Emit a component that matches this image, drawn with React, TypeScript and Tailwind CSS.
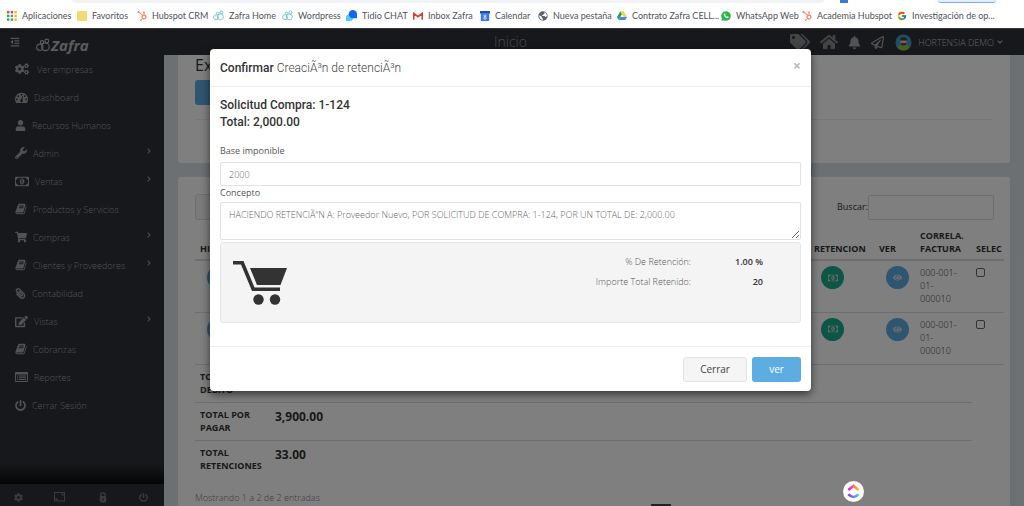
import type { ReactNode } from "react";
import {
  FaBell,
  FaChevronDown,
  FaCog,
  FaCogs,
  FaEdit,
  FaEye,
  FaHome,
  FaOutdent,
  FaPaperclip,
  FaPowerOff,
  FaRegPaperPlane,
  FaShoppingCart,
  FaTags,
  FaUser,
  FaWrench,
  FaHubspot,
  FaChevronRight,
} from "react-icons/fa";
import { FcGoogle } from "react-icons/fc";

const BOOK =
  "M1703 478q40 57 18 129l-275 906q-19 64-76.5 107.5t-122.5 43.5h-923q-77 0-148.5-53.5t-99.5-131.5q-24-67-2-127 0-4 3-27t4-37q1-8-3-21.5t-3-19.5q2-11 8-21t16.5-23.5 16.5-23.5q23-38 45-91.5t30-91.5q3-10 .5-30t-.5-28q3-11 17-28t17-23q21-36 42-92t25-90q1-9-2.5-32t.5-28q4-13 22-30.5t22-22.5q19-26 42.5-84.5t27.5-96.5q1-8-3-25.5t-2-26.5q2-8 9-18t18-23 17-21q8-12 16.5-30.5t15-35 16-36 19.5-32 26.5-23.5 36-11.5 47.5 5.5l-1 3q38-9 51-9h761q74 0 114 56t18 130l-274 906q-36 119-71.5 153.5t-128.5 34.5h-869q-27 0-38 15-11 16-1 43 24 70 144 70h923q29 0 56-15.5t35-41.5l300-987q7-22 5-57 38 15 59 43zm-1064 2q-4 13 2 22.5t20 9.5h608q13 0 25.5-9.5t16.5-22.5l21-64q4-13-2-22.5t-20-9.5h-608q-13 0-25.5 9.5t-16.5 22.5zm-83 256q-4 13 2 22.5t20 9.5h608q13 0 25.5-9.5t16.5-22.5l21-64q4-13-2-22.5t-20-9.5h-608q-13 0-25.5 9.5t-16.5 22.5z";
const MONEY =
  "M768 1152h384v-96h-128v-448h-114l-148 137 77 80q42-37 55-57h2v288h-128v96zm512-256q0 70-21 142t-59.5 134-101.5 101-138 39-138-39-101.5-101-59.5-134-21-142 21-142 59.5-134 101.5-101 138-39 138 39 101.5 101 59.5 134 21 142zm512 256v-512q-106 0-181-75t-75-181h-1152q0 106-75 181t-181 75v512q106 0 181 75t75 181h1152q0-106 75-181t181-75zm128-832v1152q0 26-19 45t-45 19h-1792q-26 0-45-19t-19-45v-1152q0-26 19-45t45-19h1792q26 0 45 19t19 45z";
const GAUGE =
  "M384 1152q0-53-37.5-90.5t-90.5-37.5-90.5 37.5-37.5 90.5 37.5 90.5 90.5 37.5 90.5-37.5 37.5-90.5zm192-448q0-53-37.5-90.5t-90.5-37.5-90.5 37.5-37.5 90.5 37.5 90.5 90.5 37.5 90.5-37.5 37.5-90.5zm428 481l101-382q6-26-7.5-48.5t-38.5-29.5-48 6.5-30 39.5l-101 382q-60 5-107 43.5t-63 98.5q-20 77 20 146t117 89 146-20 89-117q16-60-6-117t-72-91zm660-33q0-53-37.5-90.5t-90.5-37.5-90.5 37.5-37.5 90.5 37.5 90.5 90.5 37.5 90.5-37.5 37.5-90.5zm-640-640q0-53-37.5-90.5t-90.5-37.5-90.5 37.5-37.5 90.5 37.5 90.5 90.5 37.5 90.5-37.5 37.5-90.5zm448 192q0-53-37.5-90.5t-90.5-37.5-90.5 37.5-37.5 90.5 37.5 90.5 90.5 37.5 90.5-37.5 37.5-90.5zm320 448q0 261-141 483-19 29-54 29h-1402q-35 0-54-29-141-221-141-483 0-182 71-348t191-286 286-191 348-71 348 71 286 191 191 286 71 348z";

function BookIcon() {
  return (
    <svg viewBox="0 0 1792 1792" className="size-3" fill="currentColor">
      <path d={BOOK} />
    </svg>
  );
}

function MoneyIcon({ className }: { className: string }) {
  return (
    <svg viewBox="0 0 1920 1792" className={className} fill="currentColor">
      <path d={MONEY} />
    </svg>
  );
}

function GaugeIcon() {
  return (
    <svg viewBox="0 0 1792 1792" className="size-[13px]" fill="currentColor">
      <path d={GAUGE} />
    </svg>
  );
}

function ListIcon() {
  return (
    <svg viewBox="0 0 13 11" className="h-[11px] w-[13px]" fill="currentColor">
      <path
        fillRule="evenodd"
        d="M1 0h11a1 1 0 0 1 1 1v8a1 1 0 0 1-1 1H1a1 1 0 0 1-1-1V1a1 1 0 0 1 1-1zM1 2.5v6.5h11V2.5zM2 3.5h1.2v1H2zM4 3.5h7v1H4zM2 5.3h1.2v1H2zM4 5.3h7v1H4zM2 7.1h1.2v1H2zM4 7.1h7v1H4z"
      />
    </svg>
  );
}

function RoundLockIcon() {
  return (
    <svg viewBox="0 0 8 11" className="h-[11px] w-2">
      <path
        d="M1.700 5V3.200a2.300 2.300 0 0 1 4.600 0V5"
        fill="none"
        stroke="currentColor"
        strokeWidth="1.300"
      />
      <path
        fillRule="evenodd"
        fill="currentColor"
        d="M4 3.800a3.500 3.500 0 1 1 0 7 3.500 3.500 0 0 1 0-7zM3.500 6v3h1V6z"
      />
    </svg>
  );
}

// three linked circles of the Zafra brand
function ZafraMark({ className }: { className: string }) {
  return (
    <svg
      viewBox="0 0 14 14"
      className={className}
      fill="none"
      stroke="currentColor"
      strokeWidth="1.1"
    >
      <circle cx="3.800" cy="9.200" r="3.100" />
      <circle cx="9.400" cy="8.800" r="3.800" />
      <circle cx="6" cy="4.200" r="1.600" />
      <circle cx="10.800" cy="3" r="1.900" />
    </svg>
  );
}

function AppsIcon() {
  const dots = [
    "#ea4335", "#ea4335", "#fbbc04",
    "#34a853", "#4285f4", "#fbbc04",
    "#34a853", "#34a853", "#fbbc04",
  ];
  return (
    <svg viewBox="0 0 10 10" className="size-[10px]">
      {dots.map((fill, i) => (
        <rect
          key={i}
          x={(i % 3) * 3.7}
          y={Math.floor(i / 3) * 3.7}
          width="2.4"
          height="2.4"
          fill={fill}
        />
      ))}
    </svg>
  );
}

function TidioIcon() {
  return (
    <svg viewBox="0 0 12 12" className="size-[11px]">
      <path d="M0 12V8.5A4 4 0 0 1 4 4.5h4V8a4 4 0 0 1-4 4z" fill="#4fc9ff" />
      <path d="M3 4.500a4.500 4.500 0 0 1 9 0V9H7.500A4.500 4.500 0 0 1 3 4.500z" fill="#1466f0" />
    </svg>
  );
}

function GmailIcon() {
  return (
    <svg viewBox="0 0 12 9" className="h-2 w-[10px]">
      <path d="M.9 9V1.300L6 5.300l5.100-4V9" fill="none" stroke="#d93f33" strokeWidth="1.900" />
    </svg>
  );
}

function CalendarIcon() {
  return (
    <svg viewBox="0 0 10 10" className="size-[10px]">
      <rect width="10" height="2.600" fill="#1a4fb8" />
      <rect x=".8" y="2" width="8.400" height="8" fill="#3f78e0" />
      <circle cx="5" cy="4.800" r="1" fill="none" stroke="#fff" strokeWidth=".7" />
      <circle cx="5" cy="7.100" r="1.200" fill="none" stroke="#fff" strokeWidth=".7" />
    </svg>
  );
}

function GlobeIcon() {
  return (
    <svg viewBox="0 0 12 12" className="size-[10px]">
      <circle cx="6" cy="6" r="5.600" fill="#5f6368" />
      <path
        d="M1.500 5l3 1.500v1.500l1.200 1v1.800C3 10.600 1.300 8 1.500 5zM7.500 1.500C9.500 2.200 10.700 4 10.700 6L9 7.500 8 6H5V4.800h1.400V3.500h1.200z"
        fill="#fff"
      />
    </svg>
  );
}

function DriveIcon() {
  return (
    <svg viewBox="0 0 12 10.500" className="h-[9px] w-[10px]">
      <path d="M4 0L0 7l2 3.500L6 3.500z" fill="#1da462" />
      <path d="M4 0h4l4 7H8z" fill="#ffcf48" />
      <path d="M4 7h8l-2 3.500H2z" fill="#4688f4" />
    </svg>
  );
}

function WhatsAppIcon() {
  return (
    <svg viewBox="0 0 12 12" className="size-[10px]">
      <path d="M6 .3a5.700 5.700 0 1 1-2.700 10.700L.3 11.800l.8-2.900A5.700 5.700 0 0 1 6 .3z" fill="#25b845" />
      <path
        d="M4 3l.9-.1.700 1.500-.5.700c.4.800 1 1.400 1.900 1.800l.7-.7 1.500.7c.1 1.300-.9 1.900-1.900 1.700C5.200 8.200 3.600 6.600 3.300 4.600 3.200 4 3.500 3.300 4 3z"
        fill="#fff"
      />
    </svg>
  );
}

function Avatar() {
  return (
    <svg viewBox="0 0 18 18" className="size-[17px]">
      <circle cx="9" cy="9" r="8.500" fill="#3a9fd8" />
      <path d="M2.500 14.500c1-2.500 3.500-3.500 6.500-3.500s5.500 1 6.500 3.500a8.500 8.500 0 0 1-13 0z" fill="#8fbf3f" />
      <circle cx="9" cy="8" r="3.400" fill="#e9c49a" />
      <path d="M5.200 6.800C5.200 4.500 7 3.300 9 3.300s3.800 1.200 3.800 3.500z" fill="#4a4038" />
      <path d="M6 9.500h6c0 1.800-1.400 2.700-3 2.700s-3-.9-3-2.700z" fill="#5a4a3a" />
    </svg>
  );
}

function CartIcon() {
  return (
    <svg viewBox="0 0 54 44" className="h-11 w-[54px]" fill="#333">
      <path d="M0 0h10.500l11 26.500H47V30H19L8 3.500H0z" />
      <path d="M17 7h37l-6.500 17H24z" />
      <circle cx="25.500" cy="38.500" r="5.200" />
      <circle cx="42" cy="38.500" r="5.200" />
    </svg>
  );
}

function ClickUpIcon() {
  return (
    <svg viewBox="0 0 14 16" className="h-[15px] w-[13px]" fill="none" strokeWidth="2.800">
      <defs>
        <linearGradient id="cu-top">
          <stop offset="0" stopColor="#ff02f0" />
          <stop offset="1" stopColor="#ffc800" />
        </linearGradient>
        <linearGradient id="cu-bottom">
          <stop offset="0" stopColor="#8930fd" />
          <stop offset="1" stopColor="#49ccf9" />
        </linearGradient>
      </defs>
      <path d="M1.500 6.500L7 1.900l5.500 4.600" stroke="url(#cu-top)" />
      <path d="M1.500 11c3 3.800 8 3.800 11 0" stroke="url(#cu-bottom)" />
    </svg>
  );
}

const hubspot = <FaHubspot className="size-[10px] text-[#ff7a59]" />;
const zafra = <ZafraMark className="size-[11px] text-[#6cc5c1]" />;

const bookmarks: { label: string; icon: ReactNode }[] = [
  { label: "Aplicaciones", icon: <AppsIcon /> },
  { label: "Favoritos", icon: <span className="size-[10px] rounded-[1px] bg-[#f8d775]" /> },
  { label: "Hubspot CRM", icon: hubspot },
  { label: "Zafra Home", icon: zafra },
  { label: "Wordpress", icon: zafra },
  { label: "Tidio CHAT", icon: <TidioIcon /> },
  { label: "Inbox Zafra", icon: <GmailIcon /> },
  { label: "Calendar", icon: <CalendarIcon /> },
  { label: "Nueva pestaña", icon: <GlobeIcon /> },
  { label: "Contrato Zafra CELL...", icon: <DriveIcon /> },
  { label: "WhatsApp Web", icon: <WhatsAppIcon /> },
  { label: "Academia Hubspot", icon: hubspot },
  { label: "Investigación de op...", icon: <FcGoogle className="size-[10px]" /> },
];

const menu: { label: string; icon: ReactNode; more?: boolean }[] = [
  { label: "Ver empresas", icon: <FaCogs className="mr-[2px] size-[14px]" /> },
  { label: "Dashboard", icon: <GaugeIcon /> },
  { label: "Recursos Humanos", icon: <FaUser className="size-[11px]" /> },
  { label: "Admin", icon: <FaWrench className="size-3" />, more: true },
  { label: "Ventas", icon: <MoneyIcon className="h-[13px] w-[14px]" />, more: true },
  { label: "Productos y Servicios", icon: <BookIcon /> },
  { label: "Compras", icon: <FaShoppingCart className="size-3" />, more: true },
  { label: "Clientes y Proveedores", icon: <BookIcon />, more: true },
  { label: "Contabilidad", icon: <FaPaperclip className="size-[11px] -scale-x-100" /> },
  { label: "Vistas", icon: <FaEdit className="size-[13px]" />, more: true },
  { label: "Cobranzas", icon: <BookIcon /> },
  { label: "Reportes", icon: <ListIcon /> },
  { label: "Cerrar Sesión", icon: <FaPowerOff className="size-[11px]" /> },
];

function BookmarksBar() {
  return (
    <div className="flex h-7 shrink-0 flex-col bg-white font-['Lato',sans-serif]">
      <div className="flex h-[3px] shrink-0 overflow-hidden pr-7 pl-[72px]">
        <div className="flex-1 rounded-b-full bg-[#f1f3f4]" />
        <div className="ml-4 w-2 bg-[#3b78e7]" />
        <div className="ml-[90px] w-[58px] rounded-b-full border-b border-[#7da7f0] bg-[#e3edfd]" />
      </div>
      <nav className="grid flex-1 grid-cols-[70fr_60fr_76fr_69fr_64fr_67fr_67fr_58fr_79fr_104fr_81fr_95fr_127fr] items-center pl-[7px]">
        {bookmarks.map((b) => (
          <a
            key={b.label}
            href="#"
            className="flex items-center gap-[5px] text-[9px] leading-none whitespace-nowrap text-[#505357]"
          >
            {b.icon}
            {b.label}
          </a>
        ))}
      </nav>
    </div>
  );
}

function Header() {
  return (
    <header className="flex h-[27px] shrink-0 items-center border-t border-[#777] bg-[#2d3036] text-[#a5a5a5]">
      <button aria-label="Menú" className="ml-[10px]">
        <FaOutdent className="size-[10px]" />
      </button>
      <div className="ml-4 flex items-center gap-px pt-[6px] text-[#b9b9b9]">
        <ZafraMark className="size-[14px]" />
        <span className="text-[15px] leading-none font-bold italic">Zafra</span>
      </div>
      <h1 className="flex-1 pl-[142px] text-center text-sm leading-none font-light text-[#999]">
        Inicio
      </h1>
      <div className="flex items-center gap-[10px] pr-[21px]">
        <FaTags className="size-5 text-[#888]" />
        <FaHome className="size-[18px] text-[#888]" />
        <FaBell className="size-[13px]" />
        <FaRegPaperPlane className="mr-px size-[13px]" />
        <Avatar />
        <button className="-ml-1 flex items-center gap-[3px] text-[9px] leading-none font-light text-[#c4c4c4]">
          HORTENSIA DEMO
          <FaChevronDown className="size-[6px]" />
        </button>
      </div>
    </header>
  );
}

function Sidebar() {
  return (
    <aside className="flex w-[164px] shrink-0 flex-col bg-[#2d3036] text-[#a5a5a5]">
      <ul>
        {menu.map((item) => (
          <li key={item.label}>
            <a
              href="#"
              className="flex h-7 items-center gap-[6px] pr-3 pl-[15px] text-[9px] leading-none font-light"
            >
              {item.icon}
              <span className="flex-1">{item.label}</span>
              {item.more && <FaChevronRight className="mb-1 size-[6px]" />}
            </a>
          </li>
        ))}
      </ul>
      <div className="mt-auto h-5 bg-linear-to-b from-transparent to-[#0a0a0c]" />
      <div className="grid h-[22px] grid-cols-4 items-center justify-items-center pt-1 text-[#777]">
        <FaCog className="mr-1 size-[9px]" />
        <svg
          viewBox="0 0 11 10"
          className="mr-1 h-[10px] w-[11px]"
          fill="none"
          stroke="currentColor"
        >
          <rect x=".5" y=".5" width="10" height="8.500" />
          <path d="M7 2h2v2M2 5.500v2h2" />
        </svg>
        <RoundLockIcon />
        <FaPowerOff className="size-[9px]" />
      </div>
    </aside>
  );
}

function Round({ color, children }: { color: "blue" | "green"; children: ReactNode }) {
  return (
    <button
      className={`flex size-[23px] items-center justify-center rounded-full text-[#ddd] ${
        color === "blue" ? "bg-[#5dade2]" : "bg-[#1aab88]"
      }`}
    >
      {children}
    </button>
  );
}

const totals = [
  { label: ["TOTAL", "DEBITO"], value: "" },
  { label: ["TOTAL POR", "PAGAR"], value: "3,900.00" },
  { label: ["TOTAL", "RETENCIONES"], value: "33.00" },
];

function Content() {
  return (
    <main className="min-w-0 flex-1 overflow-hidden bg-[#d9e0e7] px-[14px]">
      <section className="h-[108px] rounded-b-[3px] bg-white px-[17px]">
        <h2 className="h-[25px] text-base leading-5">Ex</h2>
        <button aria-label="Exportar" className="h-[25px] w-16 rounded-[3px] bg-[#5dade2]" />
        <hr className="mt-2 border-[#eee]" />
      </section>

      <section className="mt-[14px] h-[400px] rounded-t-[3px] bg-white pt-[17px] pr-[6px] pl-[17px]">
        <div className="flex h-[26px] items-center justify-between pr-[10px]">
          <select
            aria-label="Registros"
            className="h-[26px] w-16 appearance-none rounded-[3px] border border-[#ddd] bg-[#f4f4f4]"
          />
          <label className="flex items-center text-[9px]">
            Buscar:
            <input className="h-[25px] w-[126px] rounded-[2px] border border-[#ddd]" />
          </label>
        </div>

        <table className="mt-[9px] w-full table-fixed text-left text-[9px] leading-[13px]">
          <colgroup>
            <col className="w-[75px]" />
            <col />
            <col className="w-[65px]" />
            <col className="w-[41px]" />
            <col className="w-[56px]" />
            <col className="w-8" />
          </colgroup>
          <thead>
            <tr className="border-b-2 border-[#ddd] align-bottom font-bold">
              <th className="px-[5px] pb-1">HI</th>
              <th />
              <th className="pb-1 pl-1">RETENCION</th>
              <th className="pb-1 pl-1">VER</th>
              <th className="pb-1 pl-1">CORRELA. FACTURA</th>
              <th className="pb-1 pl-1">SELEC</th>
            </tr>
          </thead>
          <tbody>
            {[1, 2].map((row) => (
              <tr key={row} className="h-[52px] border-b border-[#ddd] align-top font-light">
                <td className="pt-[5px] pl-3">
                  <Round color="blue">
                    <FaEye className="size-[9px]" />
                  </Round>
                </td>
                <td />
                <td className="pt-[5px] pl-[11px]">
                  <Round color="green">
                    <MoneyIcon className="size-[10px]" />
                  </Round>
                </td>
                <td className="pt-[5px] pl-[11px]">
                  <Round color="blue">
                    <FaEye className="size-[9px]" />
                  </Round>
                </td>
                <td className="pt-[5px] pr-[10px] pl-1">000-001-01-000010</td>
                <td className="pt-[7px] pl-1">
                  <input
                    type="checkbox"
                    aria-label="Seleccionar"
                    className="block size-[9px] appearance-none rounded-[2px] border border-[#666]"
                  />
                </td>
              </tr>
            ))}
          </tbody>
          <tfoot>
            {totals.map((total, i) => (
              <tr key={i} className="h-[38px] align-top font-bold">
                <th className={i < 2 ? "border-b border-[#ddd] px-[5px] pt-[5px]" : "px-[5px] pt-[5px]"}>
                  {total.label[0]}
                  <br />
                  {total.label[1]}
                </th>
                <td
                  colSpan={4}
                  className={
                    i < 2
                      ? "border-b border-[#ddd] px-[5px] pt-[7px] text-xs leading-[13px]"
                      : "px-[5px] pt-[7px] text-xs leading-[13px]"
                  }
                >
                  {total.value}
                </td>
              </tr>
            ))}
          </tfoot>
        </table>
        <p className="mt-[14px] text-[9px] leading-3 font-light text-[#77788c]">
          Mostrando 1 a 2 de 2 entradas
        </p>
      </section>
    </main>
  );
}

function RetentionModal() {
  return (
    <div
      role="dialog"
      aria-label="Confirmar"
      className="flex w-[601px] flex-col rounded-[4px] bg-white text-[#555] shadow-[0_3px_9px_rgba(0,0,0,0.6)]"
    >
      <div className="flex h-[38px] items-center justify-between border-b border-[#eee] px-[10px]">
        <h3 className="font-['Roboto',sans-serif] text-xs leading-4 font-light text-[#444]">
          <span className="font-medium text-[#333]">Confirmar</span> CreaciÃ³n de retenciÃ³n
        </h3>
        <button aria-label="Cerrar ventana" className="mb-1 text-sm leading-none font-bold text-[#bbb]">
          ×
        </button>
      </div>

      <div className="flex flex-col px-[10px] pt-[10px] pb-[23px]">
        <div className="font-['Roboto',sans-serif] text-xs leading-[17px] font-medium text-[#333]">
          <p>Solicitud Compra: 1-124</p>
          <p>Total: 2,000.00</p>
        </div>
        <label htmlFor="base" className="mt-3 text-[9px] leading-4">
          Base imponible
        </label>
        <input
          id="base"
          defaultValue="2000"
          className="mt-[3px] h-6 w-full rounded-[2px] border border-[#e2e2e2] px-2 text-[9px] font-light text-[#666]"
        />
        <label htmlFor="concept" className="text-[9px] leading-[14px]">
          Concepto
        </label>
        <textarea
          id="concept"
          defaultValue="HACIENDO RETENCIÃ“N A: Proveedor Nuevo, POR SOLICITUD DE COMPRA: 1-124, POR UN TOTAL DE: 2,000.00"
          className="mt-[2px] h-[38px] w-full rounded-[2px] border border-[#e2e2e2] px-2 py-[5px] text-[9px] leading-[14px] font-light text-[#666]"
        />
        <div className="mt-[2px] flex h-[81px] items-start justify-between rounded-[3px] border border-[#e6e6e6] bg-[#f4f4f4] py-[9px] pr-[37px] pl-3">
          <div className="pt-[9px]">
            <CartIcon />
          </div>
          <dl className="grid grid-cols-[auto_72px] text-right text-[9px] leading-5">
            <dt className="font-light">% De Retención:</dt>
            <dd className="font-semibold text-[#333]">1.00 %</dd>
            <dt className="font-light">Importe Total Retenido:</dt>
            <dd className="font-semibold text-[#333]">20</dd>
          </dl>
        </div>
      </div>

      <div className="flex h-[45px] items-center justify-end gap-[5px] border-t border-[#eee] px-[10px] text-[10px]">
        <button className="h-[25px] w-16 rounded-[3px] border border-[#e2e4e4] bg-[#f5f5f5] text-[#444]">
          Cerrar
        </button>
        <button className="h-[25px] w-[49px] rounded-[3px] bg-[#5dade2] text-white">ver</button>
      </div>
    </div>
  );
}

function App() {
  return (
    <div className="flex h-screen flex-col overflow-hidden font-['Open_Sans',sans-serif] text-[#333]">
      <BookmarksBar />
      <div className="relative flex min-h-0 flex-1 flex-col">
        <Header />
        <div className="flex min-h-0 flex-1">
          <Sidebar />
          <Content />
        </div>

        {/* backdrop and modal */}
        <div className="absolute inset-0 flex items-start justify-center bg-black/50 pt-[21px] pr-[3px]">
          <RetentionModal />
        </div>

        <div className="absolute right-[353px] bottom-0 h-[2px] w-5 bg-[#222]" />
        <button
          aria-label="ClickUp"
          className="absolute right-40 bottom-1 flex size-[21px] items-center justify-center rounded-full bg-white"
        >
          <ClickUpIcon />
        </button>
      </div>
    </div>
  );
}

export default App;
